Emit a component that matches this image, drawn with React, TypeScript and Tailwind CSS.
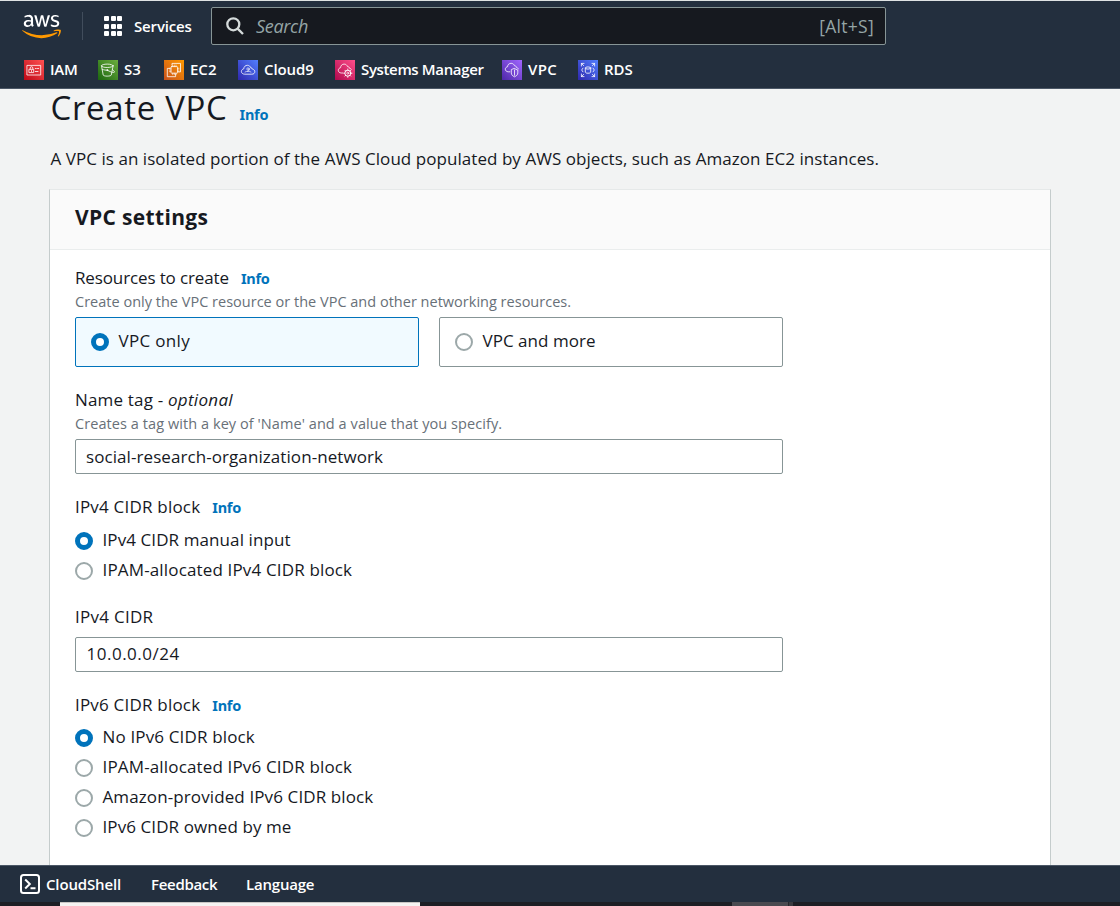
import type { ReactNode } from "react";
import { FaAws } from "react-icons/fa";

function Info() {
  return (
    <a className="font-['Noto_Sans',sans-serif] text-[14.5px] leading-5 font-bold tracking-[-0.25px] text-[#0073bb]">
      Info
    </a>
  );
}

function Radio({ checked, label, tracking }: { checked?: boolean; label: string; tracking: string }) {
  return (
    <label className="flex h-5 items-start">
      <span
        className={
          checked
            ? "mt-[3px] size-[18px] shrink-0 rounded-full border-[5px] border-[#0073bb] bg-white"
            : "mt-[3px] size-[18px] shrink-0 rounded-full border-2 border-[#9ca8a9] bg-white"
        }
      />
      <span className={`ml-[9.5px] ${tracking}`}>{label}</span>
    </label>
  );
}

function ServiceIcon({ id, from, to, children }: { id: string; from: string; to: string; children: ReactNode }) {
  return (
    <svg viewBox="0 0 20 20" className="size-5 shrink-0" fill="none" stroke="#fff" strokeWidth="0.8" strokeLinejoin="round" strokeLinecap="round">
      <defs>
        <linearGradient id={id} x1="0" y1="1" x2="1" y2="0">
          <stop offset="0" stopColor={from} />
          <stop offset="1" stopColor={to} />
        </linearGradient>
      </defs>
      <rect width="20" height="20" fill={`url(#${id})`} stroke="none" />
      {children}
    </svg>
  );
}

function Favourite({ width, icon, label, tracking }: { width: string; icon: ReactNode; label: string; tracking: string }) {
  return (
    <div className={`flex h-5 items-center gap-1.5 ${width}`}>
      {icon}
      <span className={`-mt-[3px] whitespace-nowrap ${tracking}`}>{label}</span>
    </div>
  );
}

function Header() {
  return (
    <header className="h-[89px] shrink-0 border-t border-b border-t-[#dfe3e3] border-b-[#4b5766] bg-[#232f3e] font-[550] text-white">
      <div className="flex h-[50px] items-center pl-[22px]">
        <div className="grid w-[39px]">
          <FaAws className="col-start-1 row-start-1 h-[31px] w-[39px] [clip-path:inset(0_0_44%_0)]" />
          <FaAws className="col-start-1 row-start-1 h-[31px] w-[39px] text-[#ff9900] [clip-path:inset(56%_0_0_0)]" />
        </div>
        <div className="ml-[21px] h-7 w-px bg-[#414d5c]" />
        <div className="ml-[21px] grid size-5 grid-cols-3 content-between justify-between">
          {[0, 1, 2, 3, 4, 5, 6, 7, 8].map((n) => (
            <i key={n} className="size-[5px] rounded-[1px] bg-white" />
          ))}
        </div>
        <span className="ml-[10px] w-[77px] text-[15px] leading-5 tracking-[-0.15px]">Services</span>
        <div className="flex h-[38px] w-[675px] items-center rounded-[2px] border border-[#879596] bg-[#16191f] pr-3 pl-3.5 font-normal">
          <svg viewBox="0 0 18 18" className="size-[18px]" fill="none" stroke="#d5dbdb" strokeWidth="2.3">
            <circle cx="7.3" cy="7.3" r="6" />
            <path d="M11.6 11.6 17 17" />
          </svg>
          <span className="-mt-px ml-3 text-[18px] leading-6 tracking-[-0.31px] text-[#95a5a6] italic">Search</span>
          <span className="-mt-px -mr-px ml-auto text-[17.5px] leading-6 tracking-[0.3px] text-[#95a5a6]">[Alt+S]</span>
        </div>
      </div>
      <div className="mt-[9px] flex pl-6 text-[15px] leading-5">
        <Favourite
          width="w-[74px]"
          label="IAM"
          tracking="tracking-[-0.3px]"
          icon={
            <ServiceIcon id="iam" from="#bd0816" to="#ff5252">
              <rect x="3.3" y="5.4" width="13.4" height="9.6" />
              <rect x="5.3" y="9.3" width="4.4" height="3.3" />
              <path d="M6.2 9.2V8a1.3 1.3 0 0 1 2.6 0v1.2M7.5 10.5v1M11.3 8.5h1M13.5 8.5h1.2M11.3 11.5h2.7" />
            </ServiceIcon>
          }
        />
        <Favourite
          width="w-[66px]"
          label="S3"
          tracking="tracking-[0.1px]"
          icon={
            <ServiceIcon id="s3" from="#1b660f" to="#6cae3e">
              <ellipse cx="9.3" cy="5.8" rx="5.8" ry="1.7" />
              <path d="M3.5 5.8 5.2 15c.3 1.5 7.7 1.5 8.1 0l1.8-9.2M4.2 9.3c2 .8 3.5.9 5 .9M9.3 10.2c2.5 1.4 5 2.3 6.4 2.3 1.6-.1.3-2-1.2-2.8" />
              <circle cx="9.2" cy="10.1" r=".5" />
            </ServiceIcon>
          }
        />
        <Favourite
          width="w-[74px]"
          label="EC2"
          tracking="tracking-[0px]"
          icon={
            <ServiceIcon id="ec2" from="#c8511b" to="#ff9900">
              <path d="M8 5.2V3.4h8.5v8.5h-1.8M5.8 8.4H3.3v8.3h8.3v-2.4" />
              <rect x="7" y="6.6" width="6.6" height="6.6" rx=".7" />
              <path d="M8.7 6.5V5M10.3 6.5V5M12 6.5V5M8.7 14.7v-1.5M10.3 14.7v-1.5M12 14.7v-1.5M6.9 8.3H5.5M6.9 10H5.5M6.9 11.6H5.5M15 8.3h-1.4M15 10h-1.4M15 11.6h-1.4" strokeWidth=".6" />
            </ServiceIcon>
          }
        />
        <Favourite
          width="w-[97px]"
          label="Cloud9"
          tracking="tracking-[-0.1px]"
          icon={
            <ServiceIcon id="cloud9" from="#2e27ad" to="#527fff">
              <path d="M6.5 14.2C4.7 14.2 3.4 13 3.4 11.5S4.5 9.1 5.8 8.8c0-2.2 1.7-3.5 3.6-3.5 1.8 0 2.9 1.1 3.4 2.5 1 0 1.5.5 1.7 1.4 1.3.2 2.3 1.1 2.3 2.5s-1 2.5-2.6 2.5z" />
              <circle cx="10" cy="9" r="1.2" strokeWidth=".6" />
              <path d="M11.2 9c.1 1.5-.6 2.3-1.6 2.4M7 12c1.3-1 4.7-1 6 0" strokeWidth=".6" />
            </ServiceIcon>
          }
        />
        <Favourite
          width="w-[167px]"
          label="Systems Manager"
          tracking="tracking-[-0.35px]"
          icon={
            <ServiceIcon id="ssm" from="#b0084d" to="#ff4f8b">
              <path d="M7.7 13H6.2C4.5 12.9 3.3 11.8 3.3 10.3S4.4 7.9 5.6 7.7C5.6 5.5 7.2 4.1 9.1 4.1c1.8 0 2.9 1.1 3.4 2.4 1.1 0 1.7.6 1.8 1.6 1 .2 1.7.6 2 1.3" />
              <circle cx="12.8" cy="13.2" r="3" strokeWidth="1" />
              <circle cx="12.8" cy="13.2" r="1" strokeWidth=".7" />
              <path d="M12.8 10.2V9M12.8 17.4v-1.2M9.8 13.2H8.6M17 13.2h-1.2M10.7 11.1l-.8-.8M15.7 16.1l-.8-.8M10.7 15.3l-.8.8M15.7 10.3l-.8.8" />
            </ServiceIcon>
          }
        />
        <Favourite
          width="w-[76px]"
          label="VPC"
          tracking="tracking-[0.4px]"
          icon={
            <ServiceIcon id="vpc" from="#4d27a8" to="#a166ff">
              <path d="M7.8 11.8H6.2C4.5 11.7 3.3 10.6 3.3 9.2S4.4 6.9 5.6 6.7C5.6 4.6 7.2 3.3 9.1 3.3c1.8 0 2.9 1.1 3.4 2.4 1.1 0 1.7.6 1.8 1.6 1 .2 1.7.7 2 1.6" />
              <path d="M12.5 8.6 15.8 10v2.9c0 2-1.5 3.1-3.3 3.9-1.8-.8-3.2-1.9-3.2-3.9V10zM12.5 10v5.3" />
            </ServiceIcon>
          }
        />
        <Favourite
          width="w-[60px]"
          label="RDS"
          tracking="tracking-[0px]"
          icon={
            <ServiceIcon id="rds" from="#2e27ad" to="#527fff">
              <path d="M3.4 6V3.4H6M3.4 3.4l2.2 2.2M14 3.4h2.6V6M16.6 3.4l-2.2 2.2M3.4 14v2.6H6M3.4 16.6l2.2-2.2M16.6 14v2.6H14M16.6 16.6l-2.2-2.2" />
              <ellipse cx="10" cy="8" rx="2.7" ry="1.1" />
              <path d="M7.3 8v4.2c0 1.4 5.4 1.4 5.4 0V8M4.9 8.2 3.7 10l1.2 1.8M15.1 8.2l1.2 1.8-1.2 1.8" />
            </ServiceIcon>
          }
        />
      </div>
    </header>
  );
}

function VpcForm() {
  return (
    <div className="h-[615px] px-[25px] pt-[17px] text-[17px] leading-[22px]">
      <div className="flex h-5">
        <span className="tracking-[-0.13px]">Resources to create</span>
        <span className="ml-3"><Info /></span>
      </div>
      <p className="mt-1 h-5 text-[14.5px] tracking-[0.01px] text-[#687078]">
        Create only the VPC resource or the VPC and other networking resources.
      </p>
      <div className="mt-1.5 flex gap-5">
        <div className="h-[50px] w-[344px] rounded-[2px] border border-[#0073bb] bg-[#f1faff] pt-3 pl-[15px]">
          <Radio checked label="VPC only" tracking="tracking-[0.32px]" />
        </div>
        <div className="h-[50px] w-[344px] rounded-[2px] border border-[#879596] pt-3 pl-[15px]">
          <Radio label="VPC and more" tracking="tracking-[0.03px]" />
        </div>
      </div>

      <div className="mt-[22px] h-5 whitespace-pre">
        <span className="tracking-[0.18px]">Name tag - </span>
        <span className="tracking-[0.3px] italic">optional</span>
      </div>
      <p className="mt-1 h-5 text-[14.5px] tracking-[0.07px] text-[#687078]">
        Creates a tag with a key of 'Name' and a value that you specify.
      </p>
      <div className="mt-1.5 h-[35px] w-[708px] rounded-[2px] border border-[#879596] pt-1.5 pl-[10px] tracking-[0.075px]">
        social-research-organization-network
      </div>

      <div className="mt-[22px] flex h-5">
        <span className="tracking-[0.2px]">IPv4 CIDR block</span>
        <span className="ml-3"><Info /></span>
      </div>
      <div className="mt-[13px] flex flex-col gap-2.5">
        <Radio checked label="IPv4 CIDR manual input" tracking="tracking-[0.09px]" />
        <Radio label="IPAM-allocated IPv4 CIDR block" tracking="tracking-[0.155px]" />
      </div>

      <div className="mt-[27px] h-5 tracking-[0.27px]">IPv4 CIDR</div>
      <div className="mt-[11px] h-[35px] w-[708px] rounded-[2px] border border-[#879596] pt-[5px] pl-[10.5px] tracking-[0.5px]">
        10.0.0.0/24
      </div>

      <div className="mt-[22px] flex h-5">
        <span className="tracking-[0.2px]">IPv6 CIDR block</span>
        <span className="ml-3"><Info /></span>
      </div>
      <div className="mt-3 flex flex-col gap-2.5">
        <Radio checked label="No IPv6 CIDR block" tracking="tracking-[0.15px]" />
        <Radio label="IPAM-allocated IPv6 CIDR block" tracking="tracking-[0.155px]" />
        <Radio label="Amazon-provided IPv6 CIDR block" tracking="tracking-[0.11px]" />
        <Radio label="IPv6 CIDR owned by me" tracking="tracking-[0.09px]" />
      </div>
    </div>
  );
}

export default function App() {
  return (
    <div className="flex h-[906px] w-[1120px] flex-col bg-[#f2f3f3] font-['Open_Sans','Noto_Sans',sans-serif] text-[#16191f]">
      <Header />
      <main className="h-[776px] shrink-0 pr-[69px] pl-[49px]">
        <div className="flex h-9 pl-[1.5px] leading-[38px]">
          <h1 className="text-[33px] tracking-[0.67px]">Create VPC</h1>
          <span className="mt-[15px] ml-3 flex"><Info /></span>
        </div>
        <p className="mt-[23px] h-5 pl-[1.5px] text-[17px] leading-[22px] tracking-[0.05px] whitespace-nowrap">
          A VPC is an isolated portion of the AWS Cloud populated by AWS objects, such as Amazon EC2 instances.
        </p>
        <section className="mt-[21px] border-x border-t border-x-[#c5cccc] border-t-[#e6e9e9] bg-white">
          <div className="h-[60px] border-b border-[#eaeded] bg-[#fafafa] pt-[13px] pl-[25px]">
            <h2 className="text-[21px] leading-7 font-bold tracking-[0.33px]">VPC settings</h2>
          </div>
          <VpcForm />
        </section>
      </main>
      <footer className="flex h-[37px] shrink-0 items-center border-t border-[#4b5766] bg-[#232f3e] pl-5 text-[15px] leading-5 font-[550] text-white">
        <svg viewBox="0 0 20 20" className="size-5" fill="none" stroke="#fff" strokeWidth="2">
          <rect x="1" y="1" width="18" height="18" rx="2.5" />
          <path d="M5.2 5.5 9.8 10l-4.6 4.5M10.5 14.3h5" />
        </svg>
        <span className="ml-1.5 w-[105px] tracking-[-0.15px]">CloudShell</span>
        <span className="w-[95px] tracking-[-0.3px]">Feedback</span>
        <span className="tracking-[-0.2px]">Language</span>
      </footer>
      <div className="flex h-1 shrink-0 bg-[#1d1e24]">
        <div className="ml-[60px] w-[360px] border-t border-[#c9c6c4] bg-[#f5f2f1]" />
        <div className="ml-[312px] w-14 bg-[#4a4a50]" />
        <div className="w-[5px] border-l border-[#26272c] bg-[#3a3b40]" />
      </div>
    </div>
  );
}
